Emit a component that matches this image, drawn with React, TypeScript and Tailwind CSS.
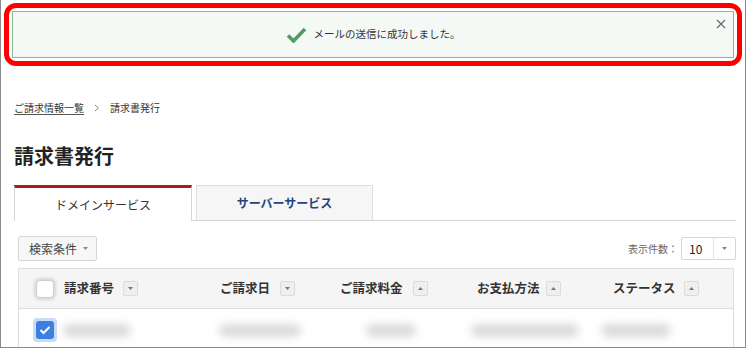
import React from "react";

const font = { fontFamily: '"Noto Sans CJK JP", "Noto Sans", sans-serif' };

function SortBtn({ up }: { up?: boolean }) {
  return (
    <span className="flex h-[15px] w-[15px] items-center justify-center rounded-[2px] border border-[#dcdcdc] bg-[#efefef]">
      <svg width="5" height="3" viewBox="0 0 5 3">
        {up ? <path d="M0 3 L2.5 0 L5 3 Z" fill="#777" /> : <path d="M0 0 L2.5 3 L5 0 Z" fill="#777" />}
      </svg>
    </span>
  );
}

function Blur({ ml, w }: { ml: string; w: string }) {
  return <div className={`${ml} ${w} h-[13px] rounded-full bg-[#dadada] blur-[4px]`} />;
}

export default function App() {
  return (
    <div
      style={font}
      className="flex h-[348px] w-[746px] flex-col overflow-hidden border-x border-b border-[#8c8c8c] bg-white text-[#333]"
    >
      {/* highlighted alert */}
      <div className="mx-[3px] mt-[3px] rounded-[12px] border-[5px] border-[#ff0000] p-[3px]">
        <div className="relative flex h-[47px] items-center justify-center border border-[#87b995] bg-[#f4f9f5]">
          <svg width="21" height="16" viewBox="0 0 21 16" className="mr-[7px]">
            <path d="M2 8.5 L7.5 14 L19 2" fill="none" stroke="#4f9d68" strokeWidth="3.6" />
          </svg>
          <span className="text-[10.5px] leading-none text-[#333]">メールの送信に成功しました。</span>
          <svg width="10" height="10" viewBox="0 0 10 10" className="absolute right-[7px] top-[7px]">
            <path d="M1 1 L9 9 M9 1 L1 9" stroke="#666" strokeWidth="1.1" />
          </svg>
        </div>
      </div>

      <div className="ml-[13px] mr-[9px] flex flex-col">
        {/* breadcrumb */}
        <div className="mt-[35px] flex h-[14px] items-center text-[10px] leading-none">
          <span className="underline decoration-[#555] underline-offset-2">ご請求情報一覧</span>
          <svg width="6" height="8" viewBox="0 0 6 8" className="ml-[10px] mr-[10px]">
            <path d="M1 1 L4.5 4 L1 7" fill="none" stroke="#888" strokeWidth="1" />
          </svg>
          <span>請求書発行</span>
        </div>

        {/* title */}
        <h1 className="mt-[27px] h-[28px] text-[20px] font-bold leading-[28px] text-[#222]">請求書発行</h1>

        {/* tabs */}
        <div className="mt-[15px] flex h-[36px] items-end border-b border-[#d5d5d5]">
          <div className="-mb-px flex h-[36px] w-[178px] items-center justify-center border-x border-t-[3px] border-x-[#d5d5d5] border-t-[#ad1a1a] bg-white text-[12px]">
            ドメインサービス
          </div>
          <div className="ml-[4px] flex h-[35px] w-[177px] items-center justify-center border-x border-t border-[#dedede] bg-[#f6f6f6] text-[12px] font-bold text-[#24457a]">
            サーバーサービス
          </div>
        </div>

        {/* panel */}
        <div className="flex flex-col pl-[4px]">
          <div className="mt-[15px] flex h-[25px] items-center justify-between">
            <div className="flex h-[25px] w-[79px] items-center rounded-[2px] border border-[#d6d6d6] bg-[#f7f7f7] pl-[10px] text-[12px] text-[#444]">
              検索条件
              <svg width="5" height="3" viewBox="0 0 5 3" className="ml-[6px]">
                <path d="M0 0 L2.5 3 L5 0 Z" fill="#888" />
              </svg>
            </div>
            <div className="flex items-center">
              <span className="mr-[3px] text-[10px] text-[#666]">表示件数：</span>
              <div className="flex h-[23px] w-[55px] items-center rounded-[2px] border border-[#d6d6d6] bg-white">
                <span className="w-[31px] pl-[7px] text-[12px] text-[#222]">10</span>
                <div className="flex h-full flex-1 items-center justify-center border-l border-[#e2e2e2]">
                  <svg width="5" height="3" viewBox="0 0 5 3">
                    <path d="M0 0 L2.5 3 L5 0 Z" fill="#888" />
                  </svg>
                </div>
              </div>
            </div>
          </div>

          {/* table */}
          <div className="mr-[2px] mt-[7px] flex flex-col border-x border-t border-[#dcdcdc]">
            <div className="flex h-[40px] items-center border-b border-[#dcdcdc] bg-[#f5f5f5] text-[12.5px] font-bold">
              <span className="ml-[17px] h-[18px] w-[18px] rounded-[4px] border border-[#cfcfcf] bg-white shadow-[0_0_3px_2px_rgba(0,0,0,0.12)]" />
              <span className="ml-[10px] w-[50px] whitespace-nowrap">請求番号</span>
              <span className="ml-[9px]"><SortBtn /></span>
              <span className="ml-[82px] w-[48px] whitespace-nowrap">ご請求日</span>
              <span className="ml-[12px]"><SortBtn /></span>
              <span className="ml-[45px] w-[60px] whitespace-nowrap">ご請求料金</span>
              <span className="ml-[13px]"><SortBtn up /></span>
              <span className="ml-[49px] w-[60px] whitespace-nowrap">お支払方法</span>
              <span className="ml-[9px]"><SortBtn up /></span>
              <span className="ml-[52px] w-[60px] whitespace-nowrap">ステータス</span>
              <span className="ml-[11px]"><SortBtn up /></span>
            </div>
            <div className="flex h-[42px] items-center">
              <span className="ml-[14px] flex h-[24px] w-[24px] items-center justify-center rounded-[4px] bg-[#c9dbf6]">
                <span className="flex h-[18px] w-[18px] items-center justify-center rounded-[3px] bg-[#3c7fe0]">
                  <svg width="12" height="10" viewBox="0 0 12 10">
                    <path d="M1.5 5 L4.5 8 L10.5 2" fill="none" stroke="#fff" strokeWidth="2" />
                  </svg>
                </span>
              </span>
              <Blur ml="ml-[6px]" w="w-[68px]" />
              <Blur ml="ml-[88px]" w="w-[82px]" />
              <Blur ml="ml-[65px]" w="w-[50px]" />
              <Blur ml="ml-[55px]" w="w-[108px]" />
              <Blur ml="ml-[22px]" w="w-[70px]" />
            </div>
          </div>
        </div>
      </div>
    </div>
  );
}
